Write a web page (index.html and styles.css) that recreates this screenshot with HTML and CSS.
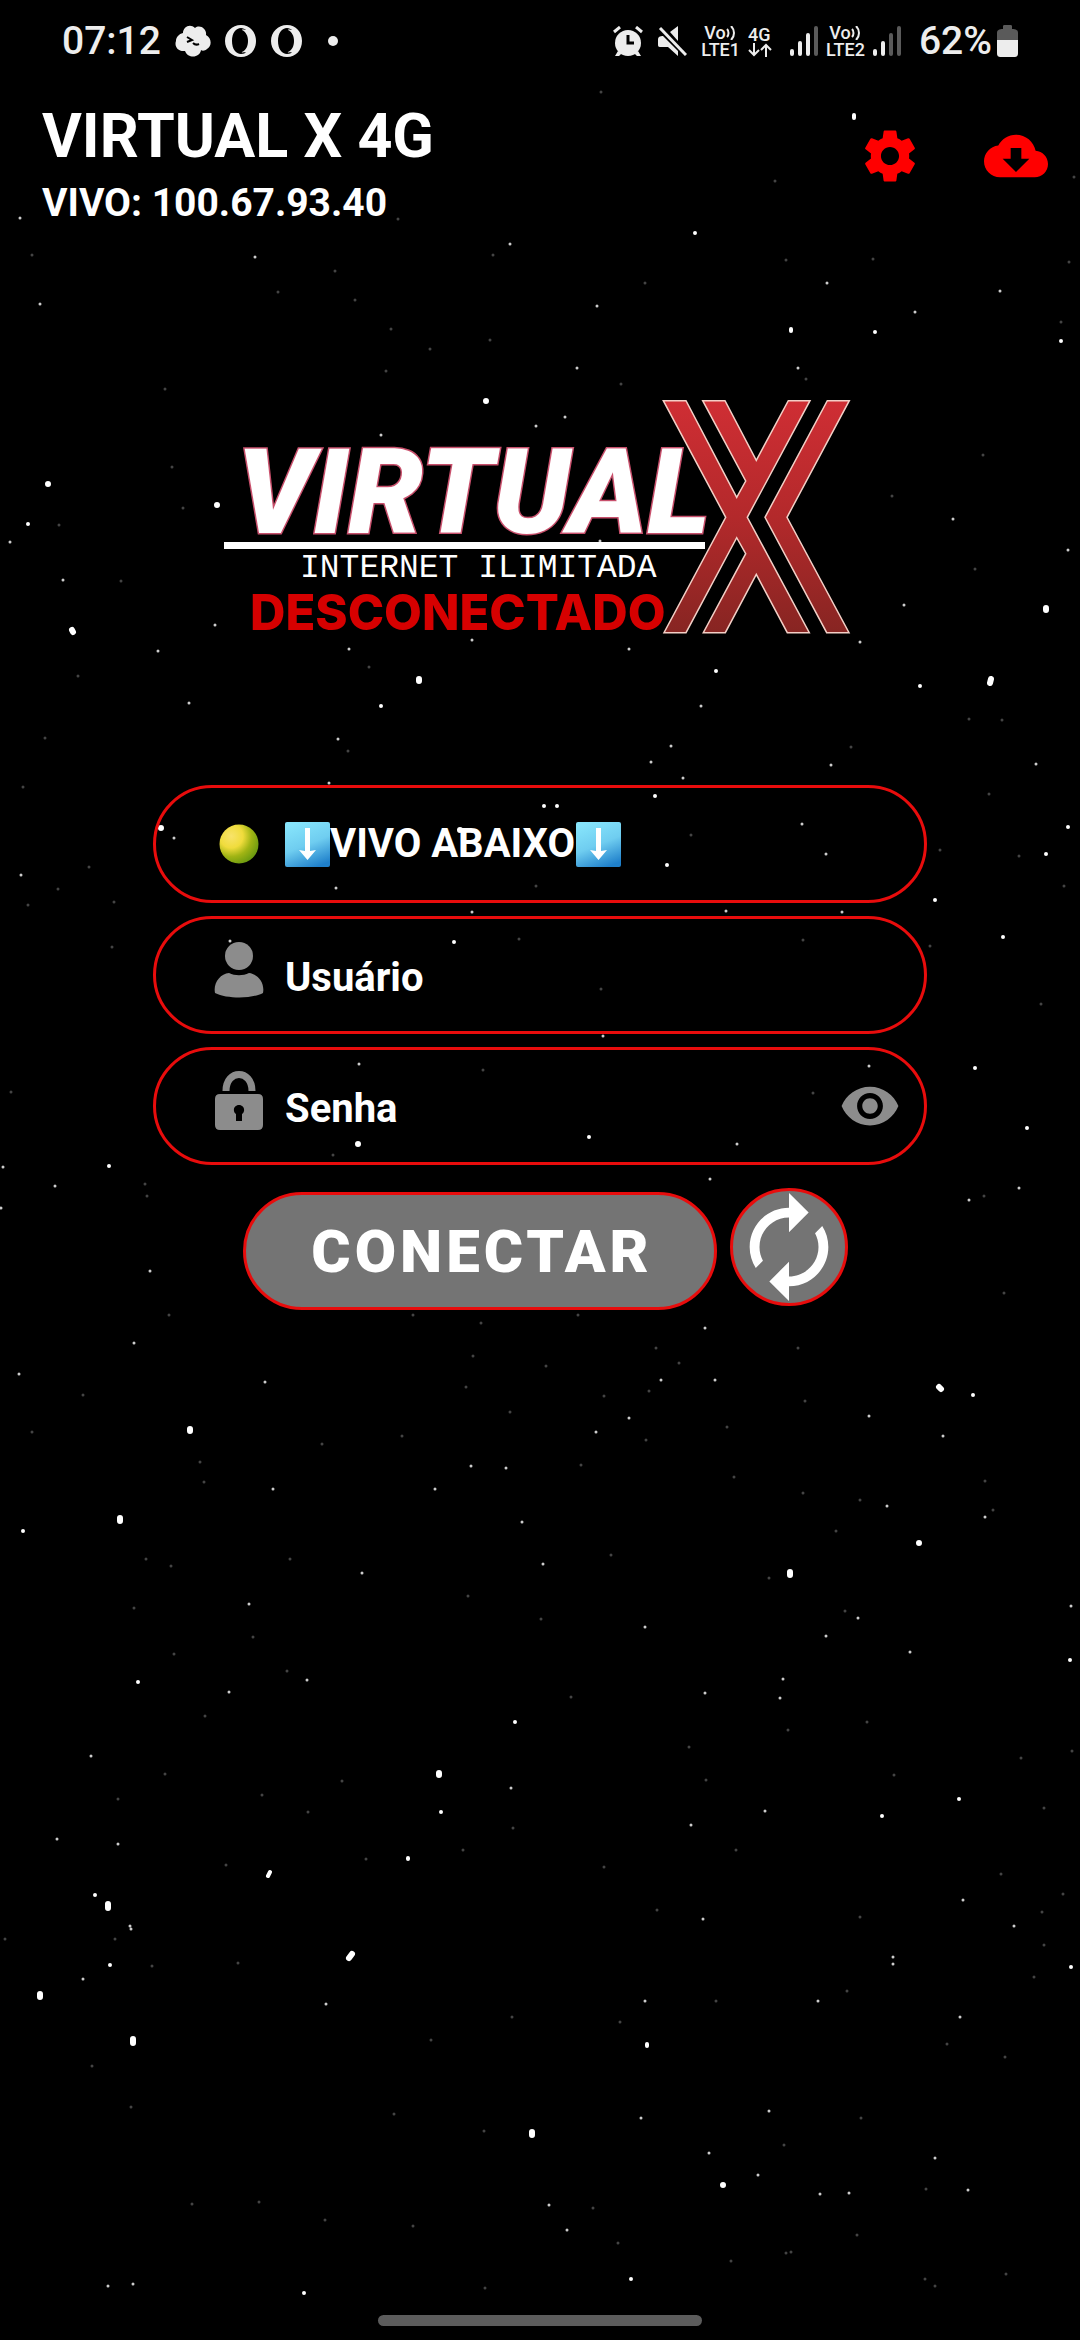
FILE: index.html
```html
<!DOCTYPE html>
<html lang="pt-BR">
<head>
<meta charset="utf-8">
<meta name="viewport" content="width=device-width, initial-scale=1">
<title>VIRTUAL X 4G</title>
<link rel="stylesheet" href="styles.css">
</head>
<body>
<svg class="stars" viewBox="0 0 1080 2340" preserveAspectRatio="xMidYMid slice" aria-hidden="true">
  <path class="star-big" d="M217 505h0M1046 608v2M72 630l1 2M419 679v2M991 679l-1 4M161 828h0M460 830h0M358 1144h0M939 1387l2 2M190 1429v2M120 1518v3M919 1543h0M790 1572v3M439 1773v2M108 1904v4M352 1954l-3 4M40 1994v3M133 2039v4M532 2132v3M723 2185h0M486 401h0M48 484h0"/>
  <path class="star-mid" d="M920 686h0M875 332h0M791 329v2M1061 341h0M716 671h0M381 706h0M28 524h0M695 233h0M854 115v3M544 806h0M557 806h0M454 942h0M589 1137h0M655 796h0M667 865h0M935 900h0M109 1166h0M1068 827h0M1046 854h0M1003 937h0M975 1068h0M1027 1128h0M973 1395h0M23 1531h0M1070 1660h0M138 1682h0M515 1722h0M959 1799h0M882 1816h0M441 1812h0M408 1858v1M270 1872l-2 4M95 1895h0M110 1965h0M647 2044v2M1071 1967h0M631 2279h0M304 2293h0"/>
  <path class="star-small" d="M20 218h0M255 257h0M510 244h0M827 283h0M40 304h0M597 306h0M915 312h0M1000 291h0M577 368h0M798 368h0M565 417h0M536 426h0M381 435h0M953 519h0M1068 550h0M10 542h0M158 651h0M629 649h0M701 706h0M189 703h0M338 739h0M671 746h0M651 762h0M831 765h0M1036 764h0M329 783h0M472 640h0M860 642h0M904 605h0M63 580h0M215 625h0M349 649h0M600 541h0M174 838h0M336 888h0M472 912h0M359 1064h0M603 1036h0M230 941h0M683 778h0M802 824h0M826 854h0M842 912h0M726 911h0M869 1066h0M737 1144h0M710 1179h0M21 875h0M3 1167h0M55 1186h0M1 1208h0M150 1271h0M1019 1188h0M969 1200h0M134 1343h0M19 1374h0M265 1382h0M705 1328h0M661 1380h0M715 1380h0M629 1418h0M596 1432h0M869 1416h0M943 1436h0M471 1466h0M506 1468h0M522 1522h0M887 1506h0M985 1517h0M543 1564h0M362 1573h0M249 1604h0M645 1627h0M858 1618h0M1071 1606h0M826 1636h0M910 1652h0M307 1680h0M229 1692h0M783 1679h0M780 1698h0M705 1693h0M511 1788h0M765 1811h0M273 1489h0M435 1489h0M91 1756h0M57 1839h0M118 1844h0M691 1825h0M703 1919h0M963 1900h0M130 1926h0M131 1929h0M83 1979h0M326 2004h0M645 2001h0M818 2001h0M893 1957h0M893 1964h0M960 2017h0M641 2118h0M769 2111h0M709 2153h0M935 2158h0M758 2175h0M820 2194h0M849 2193h0M968 2190h0M549 2205h0M567 2230h0M108 2286h0M133 2284h0M1014 1926h0"/>
  <path class="star-faint" d="M601 92h0M775 181h0M398 219h0M1074 177h0M873 259h0M786 260h0M1069 262h0M335 271h0M278 292h0M645 283h0M355 300h0M391 329h0M490 340h0M430 349h0M386 371h0M621 384h0M165 389h0M983 455h0M892 496h0M975 569h0M172 467h0M183 508h0M59 525h0M121 581h0M78 676h0M369 667h0M348 751h0M851 747h0M1002 720h0M969 719h0M45 738h0M806 379h0M1061 322h0M32 255h0M493 255h0M536 886h0M519 939h0M601 989h0M333 1155h0M483 1070h0M691 835h0M940 850h0M930 946h0M813 1093h0M803 940h0M23 787h0M89 867h0M58 889h0M28 905h0M114 902h0M112 947h0M11 1092h0M145 1184h0M147 1196h0M989 794h0M1019 856h0M1064 886h0M1041 1004h0M984 1196h0M1004 1293h0M169 1315h0M413 1315h0M578 1315h0M481 1323h0M798 1348h0M656 1348h0M473 1356h0M546 1366h0M466 1387h0M649 1391h0M679 1363h0M604 1396h0M805 1401h0M510 1412h0M83 1395h0M32 1432h0M322 1444h0M402 1436h0M646 1440h0M727 1427h0M581 1465h0M200 1462h0M204 1482h0M734 1477h0M803 1493h0M860 1500h0M985 1481h0M993 1510h0M836 1531h0M611 1555h0M290 1559h0M146 1559h0M171 1566h0M769 1578h0M468 1596h0M134 1608h0M541 1619h0M845 1611h0M253 1637h0M174 1654h0M287 1671h0M571 1697h0M867 1722h0M788 1730h0M689 1747h0M1021 1758h0M1072 1751h0M342 1781h0M262 1795h0M706 1780h0M894 1775h0M165 1774h0M118 1799h0M308 1812h0M1044 1808h0M205 1716h0M513 1828h0M463 1850h0M366 1859h0M226 1865h0M604 1867h0M736 1850h0M1001 1874h0M1063 1894h0M657 1910h0M860 1917h0M1042 1912h0M1044 1945h0M115 1939h0M238 1963h0M152 1966h0M5 1939h0M847 1991h0M1034 1977h0M716 2001h0M512 2017h0M620 2022h0M431 2040h0M947 2044h0M1005 2057h0M92 2066h0M131 2107h0M394 2114h0M861 2118h0M484 2131h0M784 2145h0M926 2189h0M259 2202h0M192 2204h0M593 2208h0M325 2220h0M413 2226h0M618 2243h0M857 2235h0M786 2253h0M791 2252h0M731 2261h0M485 2288h0M925 2279h0M1006 2274h0M935 2286h0"/>
</svg>

<div class="screen">
  <div class="status">
    <div class="status-left">
      <span class="clock">07:12</span>
      <svg width="36" height="32" viewBox="0 0 36 32"><path fill="#ededed" d="M8 8C8 2 15-2 20 3c5-4 12 1 11 7 6 3 6 11 1 14-2 2-5 2-6 1-1 8-13 9-16 1C3 27-1 21 1 16c0-4 3-7 7-8z"/><path d="M12 12l5 3-5 2M18 18c2 2 4 2 6 1" fill="none" stroke="#000" stroke-width="2"/></svg>
      <svg width="32" height="32" viewBox="0 0 32 32"><path fill="#ededed" fill-rule="evenodd" d="M16 0C25 0 31 7 31 16S25 32 16 32 0 25 0 16 7 0 16 0zM16 3C11 3 7 8 7 16s4 13 9 13c3 0 4-1 5-2-6 1-4 0-4 0 4-2 6-6 6-11s-2-9-6-11c0 0-1-1 4 0-1-1-3-2-5-2z"/></svg>
      <svg width="32" height="32" viewBox="0 0 32 32"><path fill="#ededed" fill-rule="evenodd" d="M16 0C25 0 31 7 31 16S25 32 16 32 0 25 0 16 7 0 16 0zM16 3C11 3 7 8 7 16s4 13 9 13c3 0 4-1 5-2-6 1-4 0-4 0 4-2 6-6 6-11s-2-9-6-11c0 0-1-1 4 0-1-1-3-2-5-2z"/></svg>
      <svg width="32" height="32" viewBox="0 0 32 32"><circle cx="16" cy="16" r="5" fill="#ededed"/></svg>
    </div>
    <div class="status-right">
      <svg class="wide" width="30" height="30" viewBox="0 0 30 30"><g fill="#ededed"><circle cx="15" cy="17" r="13"/><path d="M5 25l-3 5h4l3-3zM25 25l3 5h-4l-3-3z"/></g><path d="M1 6l6-5M29 6l-6-5" stroke="#ededed" stroke-width="3"/><path d="M15 9v8h6" fill="none" stroke="#000" stroke-width="3"/></svg>
      <svg class="wide" width="30" height="30" viewBox="0 0 30 30"><path fill="#ededed" d="M2 11c1-1 3-1 4-1l15 15v5L11 21H3c-2 0-2-1-2-3v-4c0-1 0-2 1-3zM13 6l8-6v15z"/><path d="M3 2l26 27" stroke="#ededed" stroke-width="3"/></svg>
      <div class="net"><span>Vo<svg width="11" height="14" viewBox="0 0 11 14"><path d="M1 3c2 2 2 6 0 8M5 0c4 4 4 10 0 14" fill="none" stroke="#ededed" stroke-width="2"/></svg></span><span>LTE1</span></div>
      <div class="net net-data"><span>4G</span><svg width="24" height="14" viewBox="0 0 24 14"><path d="M6 0v12M1 7l5 5 5-5M18 14V2M13 7l5-5 5 5" fill="none" stroke="#ededed" stroke-width="2"/></svg></div>
      <svg width="28" height="30" viewBox="0 0 28 30"><g stroke-width="4" stroke-linecap="round" stroke="#ededed"><path d="M2 25v3M10 17v11M18 9v19"/><path stroke="#5a5a5a" d="M26 2v26"/></g></svg>
      <div class="net"><span>Vo<svg width="11" height="14" viewBox="0 0 11 14"><path d="M1 3c2 2 2 6 0 8M5 0c4 4 4 10 0 14" fill="none" stroke="#ededed" stroke-width="2"/></svg></span><span>LTE2</span></div>
      <svg width="28" height="30" viewBox="0 0 28 30"><g stroke-width="4" stroke-linecap="round" stroke="#ededed"><path d="M2 25v3M10 17v11"/><path stroke="#5a5a5a" d="M18 9v19M26 2v26"/></g></svg>
      <div class="battery"><span class="clock">62%</span><svg width="21" height="32" viewBox="0 0 21 32"><path fill="#5a5a5a" d="M0 16V8c0-3 2-4 6-4V1c0-1 1-1 2-1h5c1 0 2 0 2 1v3c4 0 6 1 6 4v8z"/><path fill="#ededed" d="M0 15h21v13c0 3-1 4-4 4H4c-3 0-4-1-4-4z"/></svg></div>
    </div>
  </div>

  <header class="header">
    <div class="titles">
      <h1>VIRTUAL X 4G</h1>
      <p>VIVO: 100.67.93.40</p>
    </div>
    <div class="actions">
      <button type="button" aria-label="Configurações"><svg width="64" height="64" viewBox="0 0 24 24"><path fill="#f00" d="M19.14 12.94c.04-.3.06-.61.06-.94 0-.32-.02-.64-.07-.94l2.03-1.58c.18-.14.23-.41.12-.61l-1.92-3.32c-.12-.22-.37-.29-.59-.22l-2.39.96c-.5-.38-1.03-.7-1.62-.94l-.36-2.54c-.04-.24-.24-.41-.48-.41h-3.84c-.24 0-.43.17-.47.41l-.36 2.54c-.59.24-1.13.57-1.62.94l-2.39-.96c-.22-.08-.47 0-.59.22L2.74 8.87c-.12.21-.08.47.12.61l2.03 1.58c-.05.3-.09.63-.09.94s.02.64.07.94l-2.03 1.58c-.18.14-.23.41-.12.61l1.92 3.32c.12.22.37.29.59.22l2.39-.96c.5.38 1.03.7 1.62.94l.36 2.54c.05.24.24.41.48.41h3.84c.24 0 .44-.17.47-.41l.36-2.54c.59-.24 1.13-.56 1.62-.94l2.39.96c.22.08.47 0 .59-.22l1.92-3.32c.12-.22.07-.47-.12-.61l-2.01-1.58zM12 15.400c-1.88 0-3.400-1.520-3.400-3.400s1.520-3.400 3.400-3.400 3.400 1.520 3.400 3.400-1.520 3.400-3.400 3.400z"/></svg></button>
      <button type="button" aria-label="Baixar atualização"><svg width="64" height="64" viewBox="0 0 24 24"><path fill="#f00" d="M19.35 10.04C18.67 6.59 15.64 4 12 4 9.110 4 6.600 5.640 5.350 8.040 2.340 8.360 0 10.910 0 14c0 3.310 2.690 6 6 6h13c2.760 0 5-2.240 5-5 0-2.640-2.050-4.780-4.650-4.960zM17 13l-5 5-5-5h3V9h4v4h3z"/></svg></button>
    </div>
  </header>

  <main class="main">
    <svg class="logo" width="632" height="240" viewBox="0 0 632 240">
      <defs><linearGradient id="red" x1="0" y1="0" x2="0" y2="1"><stop offset="0" stop-color="#cf2e34"/><stop offset=".5" stop-color="#b3292b"/><stop offset="1" stop-color="#872522"/></linearGradient></defs>
      <text class="brand" x="13" y="135">VIRTUAL</text>
      <rect x="0" y="144" width="481" height="7" fill="#fff"/>
      <text class="tagline" x="76" y="179">INTERNET ILIMITADA</text>
      <text class="state" x="26" y="232">DESCONECTADO</text>
      <path fill="url(#red)" stroke="#f3cfc6" stroke-width="1.500" d="M439.300 2.700H462L512.700 99.300 521.700 83 478.700 2.700H501L532.300 62.300 564.300 2.700H586L523.300 119.300 585.300 234.700H563.300L532.300 176.300 501.300 234.700H479.300L521.700 155.700 512.700 139.700 462 234.700H440L501.700 119.300z"/>
      <path fill="url(#red)" stroke="#f3cfc6" stroke-width="1.500" d="M603.300 2.700H625.300L563 119.300 625 234.700H602.700L541 119.300z"/>
    </svg>

    <form class="form" onsubmit="return false">
      <label class="field">
        <svg class="field-icon" width="50" height="70" viewBox="0 0 50 70"><defs><radialGradient id="ball" cx=".3" cy=".3" r=".75"><stop offset="0" stop-color="#f8e36a"/><stop offset=".4" stop-color="#f0dc3c"/><stop offset=".7" stop-color="#a0b414"/><stop offset="1" stop-color="#6f9c10"/></radialGradient></defs><circle cx="25" cy="35" r="19.500" fill="url(#ball)"/></svg>
        <svg class="arrow" width="45" height="45" viewBox="0 0 45 45"><defs><linearGradient id="sky" x1=".3" y1="0" x2=".7" y2="1"><stop offset="0" stop-color="#86e4fb"/><stop offset=".5" stop-color="#6fcdf0"/><stop offset="1" stop-color="#1f80cb"/></linearGradient></defs><rect width="45" height="45" rx="2" fill="url(#sky)"/><path fill="#fff" d="M20 6h5v23l6-1-8.500 10L14 28l6 1z"/></svg>
        <select aria-label="Servidor"><option>VIVO ABAIXO</option></select>
        <svg class="arrow" width="45" height="45" viewBox="0 0 45 45"><rect width="45" height="45" rx="2" fill="url(#sky)"/><path fill="#fff" d="M20 6h5v23l6-1-8.500 10L14 28l6 1z"/></svg>
      </label>
      <label class="field">
        <svg class="field-icon" width="50" height="70" viewBox="0 0 50 70"><g fill="#8c8c8c"><circle cx="25" cy="16" r="14"/><path d="M1 53c-2-10 5-19 14-20 6 3 14 3 20 0 9 1 16 10 14 20-11 6-36 6-48 0z"/></g></svg>
        <input type="text" placeholder="Usuário" aria-label="Usuário">
      </label>
      <label class="field">
        <svg class="field-icon" width="50" height="70" viewBox="0 0 50 70"><path d="M12 20c0-22 26-22 26 0" fill="none" stroke="#8c8c8c" stroke-width="7"/><path fill="#8c8c8c" fill-rule="evenodd" d="M6 23h38q5 0 5 5v26q0 5-5 5H6q-5 0-5-5V28q0-5 5-5zM22 43v7h6v-7c4-3 2-9-3-9s-7 6-3 9z"/></svg>
        <input type="password" placeholder="Senha" aria-label="Senha">
        <button class="reveal" type="button" aria-label="Mostrar senha"><svg width="62" height="62" viewBox="0 0 24 24"><path fill="#8c8c8c" d="M12 4.500C7 4.500 2.730 7.610 1 12c1.730 4.390 6 7.500 11 7.500s9.270-3.110 11-7.500c-1.730-4.390-6-7.500-11-7.500zM12 17c-2.760 0-5-2.240-5-5s2.240-5 5-5 5 2.240 5 5-2.240 5-5 5zm0-8c-1.660 0-3 1.340-3 3s1.340 3 3 3 3-1.340 3-3-1.340-3-3-3z"/></svg></button>
      </label>
      <div class="submit">
        <button class="connect" type="submit">CONECTAR</button>
        <button class="refresh" type="button" aria-label="Atualizar"><svg width="118" height="118" viewBox="0 0 24 24"><path fill="#fff" d="M12 6v3l4-4-4-4v3c-4.420 0-8 3.580-8 8 0 1.570.46 3.030 1.240 4.260L6.700 14.800c-.45-.83-.7-1.790-.7-2.800 0-3.310 2.690-6 6-6zm6.760 1.740L17.300 9.200c.44.840.7 1.790.7 2.800 0 3.310-2.690 6-6 6v-3l-4 4 4 4v-3c4.420 0 8-3.580 8-8 0-1.570-.46-3.030-1.240-4.260z"/></svg></button>
      </div>
    </form>
  </main>

  <div class="home-bar"></div>
</div>
</body>
</html>
```
FILE: styles.css
```css
* { box-sizing: border-box; }

body {
  margin: 0;
  position: relative;
  background: #000;
  color: #fff;
  font-family: Roboto, "Liberation Sans", sans-serif;
}

h1, p { margin: 0; }
svg { display: block; flex: none; }

button {
  padding: 0;
  border: 0;
  background: none;
  color: inherit;
  font: inherit;
}

/* Star field behind the whole screen */
.stars {
  position: absolute;
  inset: 0;
  width: 100%;
  height: 100%;
}
.stars path { fill: none; stroke: #fff; stroke-linecap: round; }
.stars .star-big { stroke-width: 6px; }
.stars .star-mid { stroke-width: 4px; }
.stars .star-small { stroke: #ccc; stroke-width: 3px; }
.stars .star-faint { stroke: #444; stroke-width: 3px; }

.screen {
  position: relative;
  display: flex;
  flex-direction: column;
  min-height: 100vh;
}

/* Status bar */
.status {
  display: flex;
  justify-content: space-between;
  align-items: center;
  height: 76px;
  padding: 6px 62px 0;
  color: #ededed;
}
.status-left, .status-right, .battery { display: flex; align-items: center; }
.status-left { gap: 14px; }
.status-right { gap: 8px; }
.wide { margin-right: 6px; }
.clock { font-size: 39px; font-weight: 500; line-height: 48px; }
.battery { gap: 5px; margin-left: 10px; }
.net {
  display: flex;
  flex-direction: column;
  align-items: center;
  font-size: 18px;
  font-weight: 500;
  line-height: 17px;
}
.net span { display: flex; align-items: center; }
.net-data { width: 34px; align-items: flex-start; }

/* Title and toolbar */
.header {
  display: flex;
  justify-content: space-between;
  align-items: flex-start;
  padding: 24px 32px 0 42px;
}
.titles h1 { font-size: 61px; font-weight: 700; line-height: 73px; }
.titles p { margin-top: 6px; font-size: 39px; font-weight: 700; line-height: 48px; }
.actions { display: flex; gap: 62px; }
.actions button { display: flex; align-items: center; height: 112px; }

/* Logo */
.main {
  display: flex;
  flex-direction: column;
  align-items: center;
  padding: 171px 32px 0;
}
.logo { max-width: 100%; overflow: visible; }
.brand {
  fill: #fff;
  stroke: #c8506c;
  stroke-width: 3px;
  paint-order: stroke;
  font-size: 119px;
  font-style: italic;
  font-weight: 900;
}
.tagline { fill: #fff; font: 33px "Liberation Mono", monospace; }
.state { fill: #d60000; font: 800 49px Inter, sans-serif; }

/* Login form */
.form {
  display: flex;
  flex-direction: column;
  gap: 13px;
  width: 100%;
  max-width: 774px;
  margin-top: 147px;
}
.field {
  display: flex;
  align-items: center;
  height: 118px;
  padding: 0 23px 0 58px;
  border: 3px solid #e80c0c;
  border-radius: 59px;
}
.field-icon { margin-right: 21px; }
.field input, .field select {
  padding: 0;
  border: 0;
  outline: 0;
  background: none;
  appearance: none;
  color: #fff;
  font: 700 40px/56px Roboto, "Liberation Sans", sans-serif;
}
.field input { flex: 1; min-width: 0; padding-top: 5px; }
.field input::placeholder { color: #fff; opacity: 1; }
.submit {
  display: flex;
  justify-content: center;
  align-items: flex-end;
  gap: 13px;
  height: 122px;
  margin-top: 10px;
  padding-left: 11px;
}
.connect, .refresh {
  height: 118px;
  border: 3px solid #e80c0c;
  border-radius: 59px;
  background: #747474;
}
.connect {
  flex: 0 1 474px;
  padding-left: 4px;
  font-size: 60px;
  font-weight: 900;
  letter-spacing: 4px;
}
.refresh {
  display: flex;
  flex: none;
  align-self: flex-start;
  justify-content: center;
  align-items: center;
  width: 118px;
}

/* Gesture handle */
.home-bar {
  width: 30%;
  height: 11px;
  margin: auto auto 14px;
  border-radius: 6px;
  background: #5c5c5c;
}
```
